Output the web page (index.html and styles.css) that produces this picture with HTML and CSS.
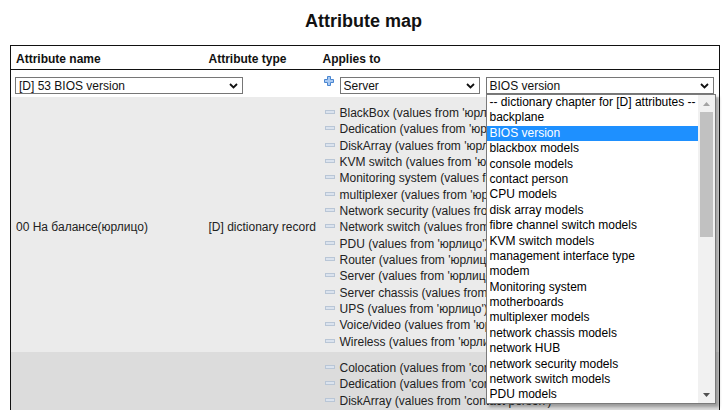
FILE: index.html
```html
<!DOCTYPE html>
<html>
<head>
<meta charset="utf-8">
<title>Attribute map</title>
<link rel="stylesheet" href="styles.css">
</head>
<body>
<h1 class="title">Attribute map</h1>
<table class="map">
  <colgroup><col class="c1"><col class="c2"><col class="c3"></colgroup>
  <thead>
    <tr><th>Attribute name</th><th>Attribute type</th><th>Applies to</th></tr>
  </thead>
  <tbody>
    <tr class="edit">
      <td>
        <div class="sel sel-name"><span>[D] 53 BIOS version</span><svg class="chev" width="9" height="6" viewBox="0 0 9 6"><path d="M1 1 L4.5 4.5 L8 1" fill="none" stroke="#111" stroke-width="1.8"/></svg></div>
      </td>
      <td></td>
      <td>
        <div class="add-line">
          <svg class="plus" width="10" height="10" viewBox="0 0 10 10"><polygon points="3.5,0.5 6.5,0.5 6.5,3.5 9.5,3.5 9.5,6.5 6.5,6.5 6.5,9.5 3.5,9.5 3.5,6.5 0.5,6.5 0.5,3.5 3.5,3.5" fill="#a9c9f2" stroke="#4a86d0" stroke-width="1"/></svg>
          <div class="sel sel-obj"><span>Server</span><svg class="chev" width="9" height="6" viewBox="0 0 9 6"><path d="M1 1 L4.5 4.5 L8 1" fill="none" stroke="#111" stroke-width="1.8"/></svg></div>
          <div class="sel sel-dict"><span>BIOS version</span><svg class="chev" width="9" height="6" viewBox="0 0 9 6"><path d="M1 1 L4.5 4.5 L8 1" fill="none" stroke="#111" stroke-width="1.8"/></svg>
            <div class="listbox">
              <ul class="options">
                <li>-- dictionary chapter for [D] attributes --</li>
                <li>backplane</li>
                <li class="selected">BIOS version</li>
                <li>blackbox models</li>
                <li>console models</li>
                <li>contact person</li>
                <li>CPU models</li>
                <li>disk array models</li>
                <li>fibre channel switch models</li>
                <li>KVM switch models</li>
                <li>management interface type</li>
                <li>modem</li>
                <li>Monitoring system</li>
                <li>motherboards</li>
                <li>multiplexer models</li>
                <li>network chassis models</li>
                <li>network HUB</li>
                <li>network security models</li>
                <li>network switch models</li>
                <li>PDU models</li>
              </ul>
              <div class="scrollbar">
                <div class="arrow up"><svg width="7" height="4" viewBox="0 0 7 4"><polygon points="0,4 7,4 3.5,0" fill="#a3a3a3"/></svg></div>
                <div class="track"><div class="thumb"></div></div>
                <div class="arrow down"><svg width="7" height="4" viewBox="0 0 7 4"><polygon points="0,0 7,0 3.5,4" fill="#505050"/></svg></div>
              </div>
            </div>
          </div>
        </div>
      </td>
    </tr>
    <tr class="grp grp-a">
      <td>00 На балансе(юрлицо)</td>
      <td>[D] dictionary record</td>
      <td>
        <ul class="items">
          <li><svg class="minus" width="10" height="4" viewBox="0 0 10 4"><rect x="0.5" y="0.5" width="9" height="3" fill="#dbe3ee" stroke="#b9c6d6"/></svg>BlackBox (values from 'юрлицо')</li>
          <li><svg class="minus" width="10" height="4" viewBox="0 0 10 4"><rect x="0.5" y="0.5" width="9" height="3" fill="#dbe3ee" stroke="#b9c6d6"/></svg>Dedication (values from 'юрлицо')</li>
          <li><svg class="minus" width="10" height="4" viewBox="0 0 10 4"><rect x="0.5" y="0.5" width="9" height="3" fill="#dbe3ee" stroke="#b9c6d6"/></svg>DiskArray (values from 'юрлицо')</li>
          <li><svg class="minus" width="10" height="4" viewBox="0 0 10 4"><rect x="0.5" y="0.5" width="9" height="3" fill="#dbe3ee" stroke="#b9c6d6"/></svg>KVM switch (values from 'юрлицо')</li>
          <li><svg class="minus" width="10" height="4" viewBox="0 0 10 4"><rect x="0.5" y="0.5" width="9" height="3" fill="#dbe3ee" stroke="#b9c6d6"/></svg>Monitoring system (values from 'юрлицо')</li>
          <li><svg class="minus" width="10" height="4" viewBox="0 0 10 4"><rect x="0.5" y="0.5" width="9" height="3" fill="#dbe3ee" stroke="#b9c6d6"/></svg>multiplexer (values from 'юрлицо')</li>
          <li><svg class="minus" width="10" height="4" viewBox="0 0 10 4"><rect x="0.5" y="0.5" width="9" height="3" fill="#dbe3ee" stroke="#b9c6d6"/></svg>Network security (values from 'юрлицо')</li>
          <li><svg class="minus" width="10" height="4" viewBox="0 0 10 4"><rect x="0.5" y="0.5" width="9" height="3" fill="#dbe3ee" stroke="#b9c6d6"/></svg>Network switch (values from 'юрлицо')</li>
          <li><svg class="minus" width="10" height="4" viewBox="0 0 10 4"><rect x="0.5" y="0.5" width="9" height="3" fill="#dbe3ee" stroke="#b9c6d6"/></svg>PDU (values from 'юрлицо')</li>
          <li><svg class="minus" width="10" height="4" viewBox="0 0 10 4"><rect x="0.5" y="0.5" width="9" height="3" fill="#dbe3ee" stroke="#b9c6d6"/></svg>Router (values from 'юрлицо')</li>
          <li><svg class="minus" width="10" height="4" viewBox="0 0 10 4"><rect x="0.5" y="0.5" width="9" height="3" fill="#dbe3ee" stroke="#b9c6d6"/></svg>Server (values from 'юрлицо')</li>
          <li><svg class="minus" width="10" height="4" viewBox="0 0 10 4"><rect x="0.5" y="0.5" width="9" height="3" fill="#dbe3ee" stroke="#b9c6d6"/></svg>Server chassis (values from 'юрлицо')</li>
          <li><svg class="minus" width="10" height="4" viewBox="0 0 10 4"><rect x="0.5" y="0.5" width="9" height="3" fill="#dbe3ee" stroke="#b9c6d6"/></svg>UPS (values from 'юрлицо')</li>
          <li><svg class="minus" width="10" height="4" viewBox="0 0 10 4"><rect x="0.5" y="0.5" width="9" height="3" fill="#dbe3ee" stroke="#b9c6d6"/></svg>Voice/video (values from 'юрлицо')</li>
          <li><svg class="minus" width="10" height="4" viewBox="0 0 10 4"><rect x="0.5" y="0.5" width="9" height="3" fill="#dbe3ee" stroke="#b9c6d6"/></svg>Wireless (values from 'юрлицо')</li>
        </ul>
      </td>
    </tr>
    <tr class="grp grp-b">
      <td>01 Контактное лицо</td>
      <td>[D] dictionary record</td>
      <td>
        <ul class="items">
          <li><svg class="minus" width="10" height="4" viewBox="0 0 10 4"><rect x="0.5" y="0.5" width="9" height="3" fill="#dbe3ee" stroke="#b9c6d6"/></svg>Colocation (values from 'contact person')</li>
          <li><svg class="minus" width="10" height="4" viewBox="0 0 10 4"><rect x="0.5" y="0.5" width="9" height="3" fill="#dbe3ee" stroke="#b9c6d6"/></svg>Dedication (values from 'contact person')</li>
          <li><svg class="minus" width="10" height="4" viewBox="0 0 10 4"><rect x="0.5" y="0.5" width="9" height="3" fill="#dbe3ee" stroke="#b9c6d6"/></svg>DiskArray (values from 'contact person')</li>
          <li><svg class="minus" width="10" height="4" viewBox="0 0 10 4"><rect x="0.5" y="0.5" width="9" height="3" fill="#dbe3ee" stroke="#b9c6d6"/></svg>KVM switch (values from 'contact person')</li>
          <li><svg class="minus" width="10" height="4" viewBox="0 0 10 4"><rect x="0.5" y="0.5" width="9" height="3" fill="#dbe3ee" stroke="#b9c6d6"/></svg>Monitoring system (values from 'contact person')</li>
          <li><svg class="minus" width="10" height="4" viewBox="0 0 10 4"><rect x="0.5" y="0.5" width="9" height="3" fill="#dbe3ee" stroke="#b9c6d6"/></svg>multiplexer (values from 'contact person')</li>
          <li><svg class="minus" width="10" height="4" viewBox="0 0 10 4"><rect x="0.5" y="0.5" width="9" height="3" fill="#dbe3ee" stroke="#b9c6d6"/></svg>Network security (values from 'contact person')</li>
          <li><svg class="minus" width="10" height="4" viewBox="0 0 10 4"><rect x="0.5" y="0.5" width="9" height="3" fill="#dbe3ee" stroke="#b9c6d6"/></svg>Network switch (values from 'contact person')</li>
          <li><svg class="minus" width="10" height="4" viewBox="0 0 10 4"><rect x="0.5" y="0.5" width="9" height="3" fill="#dbe3ee" stroke="#b9c6d6"/></svg>PDU (values from 'contact person')</li>
          <li><svg class="minus" width="10" height="4" viewBox="0 0 10 4"><rect x="0.5" y="0.5" width="9" height="3" fill="#dbe3ee" stroke="#b9c6d6"/></svg>Router (values from 'contact person')</li>
          <li><svg class="minus" width="10" height="4" viewBox="0 0 10 4"><rect x="0.5" y="0.5" width="9" height="3" fill="#dbe3ee" stroke="#b9c6d6"/></svg>Server (values from 'contact person')</li>
          <li><svg class="minus" width="10" height="4" viewBox="0 0 10 4"><rect x="0.5" y="0.5" width="9" height="3" fill="#dbe3ee" stroke="#b9c6d6"/></svg>UPS (values from 'contact person')</li>
          <li><svg class="minus" width="10" height="4" viewBox="0 0 10 4"><rect x="0.5" y="0.5" width="9" height="3" fill="#dbe3ee" stroke="#b9c6d6"/></svg>Wireless (values from 'contact person')</li>
        </ul>
      </td>
    </tr>
  </tbody>
</table>
</body>
</html>
```

FILE: styles.css
```css
* { box-sizing: border-box; }
html, body { margin: 0; padding: 0; }
body {
  font-family: "Liberation Sans", Arial, sans-serif;
  font-size: 12px;
  line-height: 14px;
  color: #222;
  background: #fff;
  width: 727px;
  height: 410px;
  overflow: hidden;
}
.title {
  font-size: 18px;
  line-height: 21px;
  font-weight: bold;
  text-align: center;
  color: #111;
  margin: 11px 0 13px;
}
.map {
  margin-left: 10px;
  width: 710px;
  border-collapse: collapse;
  table-layout: fixed;
  border: 1px solid #111;
}
.c1 { width: 193px; }
.c2 { width: 114px; }
.map th {
  text-align: left;
  font-weight: bold;
  color: #111;
  padding: 6px 5px 3px;
  border-bottom: 1px solid #111;
}
.map td {
  padding: 0 5px;
  vertical-align: middle;
  white-space: nowrap;
}
.edit td { padding-top: 7px; padding-bottom: 3px; background: #fff; }
.grp-a td { background: #ebebeb; }
.grp-b td { background: #dcdcdc; }
.grp td { padding-top: 8px; padding-bottom: 2px; }

.sel {
  position: relative;
  height: 17px;
  border: 1px solid #767676;
  background: #fff;
  display: flex;
  align-items: center;
  justify-content: space-between;
  padding: 1px 4px 0 3px;
  color: #111;
}
.sel-name { width: 228px; margin-left: -1px; }
.add-line { display: flex; align-items: flex-start; }
.plus { margin: -1px 6px 0 1px; flex: none; }
.sel-obj { width: 140px; flex: none; }
.sel-dict { width: 228px; margin-left: 6px; flex: none; }
.chev { flex: none; }

.listbox {
  position: absolute;
  left: -1px;
  top: calc(100% + 1px);
  width: 230px;
  height: 310px;
  border: 1px solid #7a7a7a;
  background: #fff;
  box-shadow: 3px 3px 3px rgba(0, 0, 0, 0.3);
  display: flex;
  z-index: 5;
}
.options {
  list-style: none;
  margin: 0;
  padding: 0;
  flex: 1;
  color: #000;
}
.options li {
  height: 15.4px;
  line-height: 15.4px;
  padding-left: 3px;
}
.options li.selected { background: #1e90ff; color: #fff; }

.scrollbar {
  width: 17px;
  background: #f1f1f1;
  display: flex;
  flex-direction: column;
}
.arrow {
  height: 17px;
  display: flex;
  align-items: center;
  justify-content: center;
  flex: none;
}
.track { flex: 1; }
.thumb {
  margin: 0 2px;
  height: 125px;
  background: #c1c1c1;
}

.items {
  list-style: none;
  margin: 0;
  padding: 0;
}
.items li {
  height: 16.33px;
  display: flex;
  align-items: center;
  padding-left: 2px;
}
.minus { margin-right: 5px; flex: none; position: relative; top: -1px; }
```
